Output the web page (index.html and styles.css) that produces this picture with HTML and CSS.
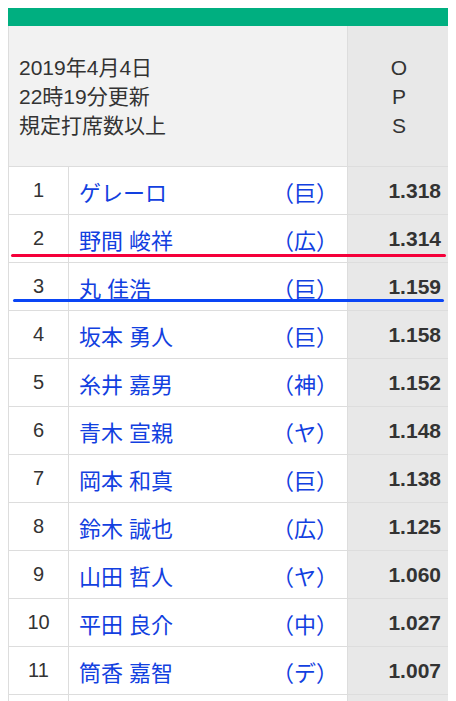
FILE: index.html
```html
<!DOCTYPE html>
<html lang="ja">
<head>
    <meta charset="UTF-8">
    <meta name="viewport" content="width=device-width, initial-scale=1.0">
    <title>OPS ランキング</title>
    <link rel="stylesheet" href="styles.css">
</head>
<body>
    <div class="wrap">
        <div class="bar"></div>
        <table class="rank">
            <colgroup>
                <col class="c-no">
                <col class="c-name">
                <col class="c-ops">
                <col class="c-more">
            </colgroup>
            <thead>
                <tr>
                    <th colspan="2" class="info">2019年4月4日<br>22時19分更新<br>規定打席数以上</th>
                    <th class="ops">O<br>P<br>S</th>
                    <th class="more"></th>
                </tr>
            </thead>
            <tbody>
                <tr><td class="no">1</td><td class="name"><div><span>ゲレーロ</span><span class="team">（巨）</span></div></td><td class="val">1.318</td><td></td></tr>
                <tr><td class="no">2</td><td class="name"><div><span>野間 峻祥</span><span class="team">（広）</span></div></td><td class="val">1.314</td><td></td></tr>
                <tr><td class="no">3</td><td class="name"><div><span>丸 佳浩</span><span class="team">（巨）</span></div></td><td class="val">1.159</td><td></td></tr>
                <tr><td class="no">4</td><td class="name"><div><span>坂本 勇人</span><span class="team">（巨）</span></div></td><td class="val">1.158</td><td></td></tr>
                <tr><td class="no">5</td><td class="name"><div><span>糸井 嘉男</span><span class="team">（神）</span></div></td><td class="val">1.152</td><td></td></tr>
                <tr><td class="no">6</td><td class="name"><div><span>青木 宣親</span><span class="team">（ヤ）</span></div></td><td class="val">1.148</td><td></td></tr>
                <tr><td class="no">7</td><td class="name"><div><span>岡本 和真</span><span class="team">（巨）</span></div></td><td class="val">1.138</td><td></td></tr>
                <tr><td class="no">8</td><td class="name"><div><span>鈴木 誠也</span><span class="team">（広）</span></div></td><td class="val">1.125</td><td></td></tr>
                <tr><td class="no">9</td><td class="name"><div><span>山田 哲人</span><span class="team">（ヤ）</span></div></td><td class="val">1.060</td><td></td></tr>
                <tr><td class="no">10</td><td class="name"><div><span>平田 良介</span><span class="team">（中）</span></div></td><td class="val">1.027</td><td></td></tr>
                <tr><td class="no">11</td><td class="name"><div><span>筒香 嘉智</span><span class="team">（デ）</span></div></td><td class="val">1.007</td><td></td></tr>
                <tr><td class="no"></td><td class="name"></td><td class="val"></td><td></td></tr>
            </tbody>
        </table>
        <!-- 手書きの下線 -->
        <div class="mark mark-red"></div>
        <div class="mark mark-blue"></div>
    </div>
</body>
</html>
```

FILE: styles.css
```css
html{
    overflow: hidden;
}
body{
    margin: 8px;
    background: #fff;
    color: #333;
    font-family: "Liberation Sans", "Noto Sans CJK JP", sans-serif;
}
/* 表は画面の右端で切れる */
.wrap{
    position: relative;
    margin-right: -8px;
    overflow: hidden;
}
.bar{
    height: 18px;
    background-color: #00af80;
}
.rank{
    border-collapse: collapse;
    table-layout: fixed;
    width: 540px;
}
.c-no{ width: 60px; }
.c-name{ width: 279px; }
.c-ops{ width: 103px; }
.c-more{ width: 98px; }

.rank th,
.rank td{
    border: 1px solid #ddd;
    padding: 0;
}
.rank thead th{
    height: 140px;
    border-top: 0;
    background-color: #f2f2f2;
    font-weight: normal;
    font-size: 21px;
    line-height: 29px;
    vertical-align: middle;
}
.info{
    text-align: left;
    padding-left: 10px !important;
}
.rank thead .ops{
    background-color: #e8e8e8;
    text-align: center;
}
.rank td{
    height: 47px;
    font-size: 20px;
}
.no{
    text-align: center;
}
.name{
    padding: 0 9px 0 10px !important;
    color: #1240e0;
    font-size: 22px !important;
}
.name div{
    display: flex;
    justify-content: space-between;
}
.val{
    background-color: #e8e8e8;
    text-align: right;
    padding-right: 9px !important;
    font-weight: bold;
    font-size: 21px !important;
}

.mark{
    position: absolute;
    height: 3px;
    border-radius: 2px;
}
.mark-red{
    top: 246px;
    left: 3px;
    width: 435px;
    background-color: #f5003a;
}
.mark-blue{
    top: 291px;
    left: 5px;
    width: 431px;
    background-color: #0a45f5;
}
```
